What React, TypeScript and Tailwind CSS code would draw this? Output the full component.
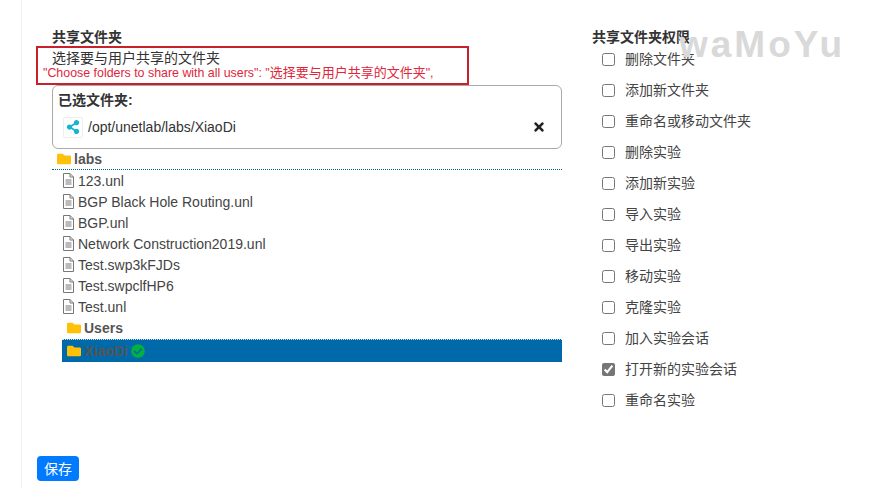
import { FaCheckCircle, FaFolder, FaShareAlt, FaTimes } from "react-icons/fa";

const files = [
  "123.unl",
  "BGP Black Hole Routing.unl",
  "BGP.unl",
  "Network Construction2019.unl",
  "Test.swp3kFJDs",
  "Test.swpclfHP6",
  "Test.unl"
];

const permissions = [
  { label: "删除文件夹", checked: false },
  { label: "添加新文件夹", checked: false },
  { label: "重命名或移动文件夹", checked: false },
  { label: "删除实验", checked: false },
  { label: "添加新实验", checked: false },
  { label: "导入实验", checked: false },
  { label: "导出实验", checked: false },
  { label: "移动实验", checked: false },
  { label: "克隆实验", checked: false },
  { label: "加入实验会话", checked: false },
  { label: "打开新的实验会话", checked: true },
  { label: "重命名实验", checked: false }
];

const FileIcon = () => (
  <svg width="13" height="15" viewBox="0 0 13 15" fill="none" stroke="#777" strokeWidth="1" className="shrink-0">
    <path d="M1.500 .5h6.500l3.500 3.500v10.500h-10z" />
    <path d="M8 .5v3.500h3.500" />
    <path d="M3.500 7h6M3.500 9h6M3.500 11h6" />
  </svg>
);

export default function App() {
  return (
    <div className="relative flex h-[488px] w-[889px] overflow-hidden bg-white font-['Liberation_Sans','Noto_Sans_CJK_SC',sans-serif] text-sm text-[#333]">
      <div className="w-[22px] shrink-0 border-r border-[#f0f0f0]" />

      <div className="flex w-[570px] shrink-0 flex-col pl-[14px] pt-[27px]">
        <h2 className="ml-[16px] h-[19px] text-[14px] font-bold leading-[20px] text-[#333]">共享文件夹</h2>

        <div className="h-[39px] w-[433px] border-2 border-[#c9202c] pl-[14px] pt-[2px]">
          <p className="h-[15px] text-[14px] leading-[17px] text-[#333]">选择要与用户共享的文件夹</p>
          <p className="-ml-[9px] whitespace-nowrap text-[12.400px] leading-[15px] text-[#e0263a]">
            "Choose folders to share with all users": "<span className="text-[13px]">选择要与用户共享的文件夹</span>",
          </p>
        </div>

        <div className="ml-[16px] h-[64px] w-[510px] rounded-[6px] border border-[#aaa] px-[5px] pt-[4px]">
          <p className="text-[14px] font-bold leading-[20px] text-[#333]">已选文件夹:</p>
          <div className="mt-[6px] flex h-[22px] items-center pl-[5px]">
            <span className="flex h-[21px] w-[20px] items-center justify-center rounded-[2px] border border-[#eee]">
              <FaShareAlt className="text-[14px] text-[#17b3d1]" />
            </span>
            <span className="ml-[5px] text-[14px]">/opt/unetlab/labs/XiaoDi</span>
            <FaTimes className="ml-auto mr-[10px] text-[14px] text-[#222]" />
          </div>
        </div>

        <div className="ml-[16px] w-[510px]">
          <div className="flex h-[21px] items-center border-b border-dotted border-[#006699] pl-[5px]">
            <FaFolder className="text-[14px] text-[#ffc107]" />
            <span className="ml-[3px] text-[14px] font-bold text-[#555]">labs</span>
          </div>
          <ul className="pl-[10px]">
            {files.map((name) => (
              <li key={name} className="flex h-[21px] items-center gap-[3px] text-[14px] text-[#444]">
                <FileIcon />
                <span>{name}</span>
              </li>
            ))}
          </ul>
          <div className="ml-[10px]">
            <div className="flex h-[22px] items-center pl-[5px]">
              <FaFolder className="text-[14px] text-[#ffc107]" />
              <span className="ml-[3px] text-[14px] font-bold text-[#555]">Users</span>
            </div>
            <div className="flex h-[23px] items-center border-t border-dotted border-[#cfe0ea] bg-[#0069aa] pl-[5px]">
              <FaFolder className="text-[14px] text-[#ffc107]" />
              <span className="ml-[3px] text-[14px] font-bold text-[#555]">XiaoDi</span>
              <FaCheckCircle className="ml-[3px] text-[14px] text-[#00b33c]" />
            </div>
          </div>
        </div>
      </div>

      <div className="pt-[27px]">
        <h2 className="h-[16px] text-[14px] font-bold leading-[20px] text-[#333]">共享文件夹权限</h2>
        <ul className="pl-[10px]">
          {permissions.map((item) => (
            <li key={item.label} className="flex h-[31px] items-center">
              <input
                type="checkbox"
                defaultChecked={item.checked}
                className="m-0 mt-[1px] h-[13px] w-[13px] accent-[#767676]"
              />
              <span className="ml-[10px] text-[14px] text-[#444]">{item.label}</span>
            </li>
          ))}
        </ul>
      </div>

      <span className="absolute left-[679px] top-[23px] text-[37px] font-bold leading-[44px] tracking-[3px] text-[#d9d9d9]">
        waMoYu
      </span>

      <button className="absolute left-[37px] top-[456px] h-[25px] w-[42px] rounded-[4px] bg-[#007bff] text-[14px] text-white">
        保存
      </button>
    </div>
  );
}
